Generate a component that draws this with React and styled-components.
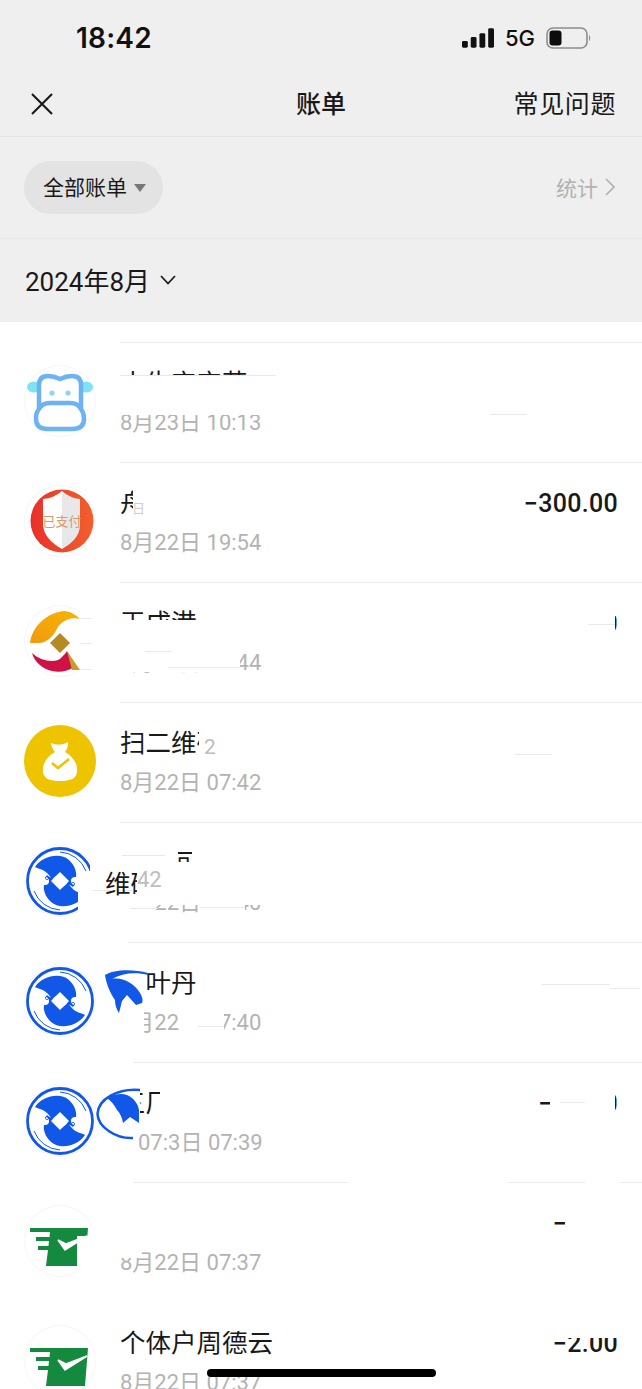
// App.jsx
import React from "react";
import styled, { createGlobalStyle } from "styled-components";

const Global = createGlobalStyle`
  html, body { margin: 0; padding: 0; background: #fff; }
  body { font-family: Roboto, "Noto Sans CJK SC", sans-serif; }
`;

const Page = styled.div`
  position: relative;
  width: 642px;
  height: 1389px;
  overflow: hidden;
  background: #fff;
  color: #191919;
`;

const Top = styled.div`
  background: #efefef;
`;

const StatusBar = styled.div`
  height: 72px;
  display: flex;
  align-items: center;
  justify-content: space-between;
  padding: 4px 51px 0 76px;
  box-sizing: border-box;
`;

const Clock = styled.div`
  font: 600 28px Inter, sans-serif;
  color: #111;
  letter-spacing: 0.2px;
`;

const StatusIcons = styled.div`
  display: flex;
  align-items: center;
  gap: 11px;
`;

const Net = styled.span`
  font: 500 22px Inter, sans-serif;
  color: #111;
`;

const Nav = styled.div`
  height: 64px;
  display: grid;
  grid-template-columns: 1fr auto 1fr;
  align-items: center;
  padding: 0 26px 0 30px;
  border-bottom: 1px solid #e6e6e6;
`;

const NavTitle = styled.div`
  margin-left: -4px;
  font-size: 25px;
  font-weight: 500;
  line-height: 34px;
  padding-top: 2px;
`;

const NavLink = styled.div`
  justify-self: end;
  font-size: 25px;
  line-height: 34px;
  letter-spacing: 0.6px;
  padding-top: 2px;
`;

const FilterBar = styled.div`
  height: 102px;
  display: flex;
  align-items: center;
  justify-content: space-between;
  padding: 0 27px 0 24px;
  box-sizing: border-box;
  border-bottom: 1px solid #e6e6e6;
`;

const Pill = styled.div`
  height: 53px;
  width: 139px;
  box-sizing: border-box;
  padding: 0 0 3px 19px;
  border-radius: 27px;
  background: #e3e3e3;
  display: flex;
  align-items: center;
  gap: 7px;
  font-size: 21px;
`;

const Caret = styled.span`
  width: 0;
  height: 0;
  margin-top: 3px;
  border-left: 6px solid transparent;
  border-right: 6px solid transparent;
  border-top: 8px solid #777;
`;

const Stats = styled.div`
  display: flex;
  align-items: center;
  gap: 7px;
  font-size: 21px;
  color: #b2b2b2;
  padding-bottom: 2px;
`;

const MonthBar = styled.div`
  height: 83px;
  display: flex;
  align-items: center;
  gap: 10px;
  padding: 0 0 2px 25px;
  box-sizing: border-box;
  font-size: 26px;
`;

const List = styled.div`
  padding-top: 20px;
`;

const Row = styled.div`
  position: relative;
  height: 120px;
  display: flex;
`;

const IconSlot = styled.div`
  width: 120px;
  flex: none;
  padding: 23px 0 0 24px;
  box-sizing: border-box;
`;

const Round = styled.div`
  width: 72px;
  height: 72px;
  border-radius: 50%;
  box-shadow: inset 0 0 0 1px #f6f6f6;
  svg { display: block; }
`;

const BankRound = styled(Round)`
  box-shadow: none;
  box-sizing: border-box;
  padding: 2px 0 0 2px;
`;

const Content = styled.div`
  flex: 1;
  min-width: 0;
  border-top: 1px solid ${(p) => (p.$noLine ? "transparent" : "#ececec")};
  padding: 23px 24px 0 0;
`;

const Line = styled.div`
  display: flex;
  justify-content: space-between;
  align-items: center;
  height: 34px;
`;

const Title = styled.div`
  font-size: 25.5px;
  line-height: 34px;
`;

const Amount = styled.div`
  font: 500 25px Roboto, sans-serif;
  letter-spacing: 0.3px;
  color: #191919;
`;

const DateText = styled.div`
  margin-top: 9px;
  padding-left: ${(p) => p.$indent || 0}px;
  font-size: 22px;
  line-height: 28px;
  color: #b3b3b3;
`;

// white smudges lying over the rows
const Patch = styled.div`
  position: absolute;
  left: ${(p) => p.$x}px;
  top: ${(p) => p.$y}px;
  width: ${(p) => p.$w}px;
  height: ${(p) => p.$h}px;
  background: #fff;
`;

const Streak = styled.div`
  position: absolute;
  left: ${(p) => p.$x}px;
  top: ${(p) => p.$y}px;
  width: ${(p) => p.$w}px;
  height: 1px;
  background: #e9e9e9;
`;

const Ghost = styled.div`
  position: absolute;
  left: ${(p) => p.$x}px;
  top: ${(p) => p.$y}px;
  ${(p) => (p.$w ? `width: ${p.$w}px;` : "")}
  overflow: hidden;
  white-space: nowrap;
  font-size: ${(p) => p.$size || 25.5}px;
  line-height: ${(p) => p.$lh || 34}px;
  color: ${(p) => p.$color || "#191919"};
  svg { display: block; }
`;

const HomeBar = styled.div`
  position: absolute;
  left: 207px;
  bottom: 12px;
  width: 229px;
  height: 8px;
  border-radius: 4px;
  background: #000;
`;

const CowLogo = () => (
  <svg width="72" height="72" viewBox="0 0 72 72">
    <ellipse cx="10" cy="22" rx="7" ry="5.5" fill="#7fe3f5" />
    <ellipse cx="62" cy="22" rx="7" ry="5.5" fill="#7fe3f5" />
    <path
      d="M15 44V20Q15 11 24 11Q30 11 36 14Q42 11 48 11Q57 11 57 20V44C60 48 60 52 60 54Q60 64 48 64H24Q12 64 12 54C12 50 12 48 15 44Z"
      fill="#fff"
      stroke="#6db3f2"
      strokeWidth="4.5"
    />
    <path d="M15 44Q18 38 26 38H46Q54 38 57 44" fill="none" stroke="#6db3f2" strokeWidth="4.5" />
    <circle cx="28" cy="28" r="2.6" fill="#8fd4f2" />
    <circle cx="44" cy="28" r="2.6" fill="#8fd4f2" />
  </svg>
);

const ShieldLogo = () => (
  <svg width="72" height="72" viewBox="0 0 72 72">
    <defs>
      <linearGradient id="shieldRed" x1="0" y1="0" x2="1" y2="0">
        <stop offset="0" stopColor="#e8302a" />
        <stop offset="1" stopColor="#f2602c" />
      </linearGradient>
    </defs>
    <circle cx="38" cy="36" r="31.5" fill="url(#shieldRed)" />
    <path d="M38 6Q30 13 19 14V40Q20 54 38 64Z" fill="#fff" />
    <path d="M38 6Q46 13 56 14V40Q56 54 38 64Z" fill="#e8e8ea" />
    <text x="38" y="41" textAnchor="middle" fontSize="13" fill="#dd9a6a" fontFamily="'Noto Sans CJK SC', sans-serif">
      已支付
    </text>
  </svg>
);

const CoinLogo = () => (
  <svg width="72" height="72" viewBox="0 0 72 72">
    <defs>
      <linearGradient id="coinGold" x1="0" y1="1" x2="1" y2="0">
        <stop offset="0" stopColor="#f09a10" />
        <stop offset="1" stopColor="#f7b500" />
      </linearGradient>
    </defs>
    <path d="M6 38C8 22 22 8 40 6C46 6 52 10 56 14C48 12 40 14 34 22C30 30 24 38 14 38Z" fill="url(#coinGold)" />
    <path d="M36 28L46 38L36 48L26 38Z" fill="#b58a24" />
    <path d="M8 48C16 56 30 58 36 54C40 50 42 48 43 46L50 62C44 66 36 68 28 66C18 64 10 56 8 48Z" fill="#cf1145" />
    <path d="M43 46L56 65L48 65Z" fill="#c89a30" />
  </svg>
);

const BagLogo = () => (
  <svg width="72" height="72" viewBox="0 0 72 72">
    <circle cx="36" cy="36" r="36" fill="#eec400" />
    <path
      d="M27 18Q36 22 44 17Q45 22 41 27C50 32 54 40 53 47C52 54 46 56 36 56C26 56 20 54 19 47C18 40 22 32 31 27Q27 22 27 18Z"
      fill="#fff"
    />
    <path d="M28 38L34 43L45 34" fill="none" stroke="#eec400" strokeWidth="2.6" />
  </svg>
);

// the bank's swirl is one half drawn twice, the second turned round
const BankSwirl = () => (
  <>
    <path d="M34 5A29.5 29.5 0 0 1 60 24" fill="none" stroke="#1158e8" strokeWidth="1" />
    <path d="M9 20C16 9 34 5 43 13C52 21 52 33 47 40C44 37 41 37 40 38L42 34L34 26L26 32C22 26 18 23 14 22C12 21 10 21 9 20Z" />
    <path d="M20 29C22 33 24 38 26 42C30 50 36 52 40 52L28 44L20 38Z" />
  </>
);

const BankCloud = () => (
  <>
    <circle cx="7" cy="33" r="5" fill="#fff" />
    <circle cx="13" cy="30" r="5" fill="#fff" />
    <circle cx="19" cy="34" r="4" fill="#fff" />
    <circle cx="12" cy="38" r="6" fill="#fff" />
    <circle cx="5" cy="39" r="4" fill="#fff" />
    <circle cx="21" cy="31" r="1.6" fill="none" stroke="#1158e8" strokeWidth="0.8" />
  </>
);

const BankMark = () => (
  <svg width="68" height="68" viewBox="0 0 68 68" fill="#1158e8">
    <BankSwirl />
    <g transform="rotate(180 34 34)">
      <BankSwirl />
    </g>
    <BankCloud />
    <g transform="rotate(180 34 34)">
      <BankCloud />
    </g>
    <circle cx="34" cy="34" r="32.5" fill="none" stroke="#1158e8" strokeWidth="2.8" />
    <path d="M34 25L43 34L34 43L25 34Z" fill="#fff" />
  </svg>
);

const BankLogo = () => (
  <BankRound>
    <BankMark />
  </BankRound>
);

const MailLogo = () => (
  <svg width="72" height="72" viewBox="0 0 72 72">
    <path d="M6 23H64L61 61H22L24 45H14V41H24.5L25 36H12V32H25.5L26 27H6Z" fill="#138a3e" />
    <path d="M34 35L41 45L63 31L42 39Z" fill="#fff" stroke="#fff" strokeWidth="1.5" />
  </svg>
);

const SmearTop = () => (
  <svg width="46" height="48" viewBox="0 0 46 48" fill="#1158e8">
    <path d="M1 6C10 0 30 0 44 4L44 6C32 3 18 4 8 10C18 8 30 14 36 24C39 29 39 32 38 34L32 36L23 26L18 32L15 44C12 40 11 35 11 31C6 24 2 14 1 6Z" />
  </svg>
);

const SmearLeft = () => (
  <svg width="46" height="54" viewBox="0 0 46 54" fill="#1158e8">
    <path d="M44 3C22 1 2 12 1.5 27C2 40 20 52 37 51" fill="none" stroke="#1158e8" strokeWidth="2.6" />
    <path d="M11 11C18 7 26 6 31 8C38 11 42 17 43 23L43 36L34 30L27 36C26 30 24 26 21 23C18 17 14 13 11 11Z" />
  </svg>
);

const rows = [
  {
    top: 342,
    logo: <CowLogo />,
    title: "小牛宝宝花",
    date: "8月23日 10:13",
    patches: [[118, 375, 165, 40]],
    streaks: [[120, 375, 156], [490, 414, 37]],
  },
  {
    top: 462,
    logo: <ShieldLogo />,
    title: "舟",
    date: "8月22日 19:54",
    amount: "−300.00",
    patches: [[133, 485, 110, 35]],
    ghosts: [{ x: 132, y: 499, size: 13, lh: 20, color: "#cfcfcf", text: "日" }],
  },
  {
    top: 582,
    logo: <CoinLogo />,
    title: "王成港",
    date: "8月22日 07:44",
    amount: "−0.00",
    patches: [[118, 620, 122, 52], [80, 600, 40, 80], [500, 605, 115, 40], [610, 600, 10, 16], [610, 630, 10, 10]],
    streaks: [[80, 618, 12], [80, 643, 12], [80, 669, 12], [145, 651, 27], [168, 667, 72], [588, 624, 27]],
  },
  {
    top: 702,
    logo: <BagLogo />,
    title: "扫二维码",
    date: "8月22日 07:42",
    patches: [[199, 730, 30, 35]],
    streaks: [[515, 754, 37]],
    ghosts: [{ x: 204, y: 733, size: 21, lh: 28, color: "#bdbdbd", text: "2" }],
  },
  {
    top: 822,
    logo: <BankLogo />,
    title: "个人回码",
    date: "8月22日 07:40",
    patches: [
      [78, 871, 50, 42], [90, 845, 40, 28], [80, 905, 40, 20],
      [118, 848, 60, 22], [192, 848, 60, 22], [118, 862, 160, 43],
      [118, 905, 38, 12], [200, 905, 45, 12],
    ],
    streaks: [[122, 855, 43], [130, 908, 28], [200, 907, 45], [92, 890, 40]],
    ghosts: [
      { x: 137, y: 866, size: 22, lh: 28, color: "#bdbdbd", text: "42" },
      { x: 105, y: 867, w: 32, text: "维码" },
    ],
  },
  {
    top: 942,
    logo: <BankLogo />,
    title: "周叶丹",
    date: "8月22日 07:40",
    patches: [[118, 942, 10, 1], [118, 968, 29, 34], [118, 1008, 26, 30], [179, 1008, 45, 30]],
    streaks: [[198, 1026, 26], [542, 984, 68], [610, 988, 30]],
    ghosts: [{ x: 104, y: 969, lh: 48, text: <SmearTop /> }],
  },
  {
    top: 1062,
    logo: <BankLogo />,
    title: "三厂",
    date: "07:3日 07:39",
    indent: 18,
    amount: "−12.00",
    patches: [[118, 1062, 15, 1], [118, 1085, 22, 35], [160, 1085, 60, 35], [550, 1090, 65, 26], [614, 1085, 8, 10], [614, 1110, 8, 10]],
    streaks: [[560, 1102, 25]],
    ghosts: [{ x: 96, y: 1087, lh: 54, text: <SmearLeft /> }],
  },
  {
    top: 1182,
    logo: <MailLogo />,
    title: "个体户周德云",
    date: "8月22日 07:37",
    amount: "−2.00",
    patches: [
      [118, 1182, 15, 1], [348, 1182, 160, 1], [585, 1182, 35, 1],
      [118, 1205, 170, 35], [118, 1240, 24, 18], [77, 1236, 32, 40], [92, 1224, 20, 12], [565, 1205, 60, 35],
    ],
  },
  {
    top: 1302,
    noLine: true,
    logo: <MailLogo />,
    title: "个体户周德云",
    date: "8月22日 07:37",
    amount: "−2.00",
    patches: [[540, 1325, 80, 13], [190, 1326, 70, 5]],
  },
];

export default function App() {
  return (
    <Page>
      <Global />
      <Top>
        <StatusBar>
          <Clock>18:42</Clock>
          <StatusIcons>
            <svg width="32" height="20" viewBox="0 0 33 20" fill="#111">
              <rect x="0" y="13" width="6" height="7" rx="1.5" />
              <rect x="9" y="9" width="6" height="11" rx="1.5" />
              <rect x="18" y="5" width="6" height="15" rx="1.5" />
              <rect x="27" y="0" width="6" height="20" rx="1.5" />
            </svg>
            <Net>5G</Net>
            <svg width="45" height="22" viewBox="0 0 45 22">
              <rect x="1" y="1" width="40" height="20" rx="6" fill="none" stroke="#8c8c8c" strokeWidth="1.6" />
              <rect x="3.5" y="3.5" width="12" height="15" rx="3" fill="#0c0c0c" />
              <path d="M43 8C44.5 9 44.5 13 43 14Z" fill="#8c8c8c" />
            </svg>
          </StatusIcons>
        </StatusBar>
        <Nav>
          <svg width="24" height="24" viewBox="0 0 24 24" fill="none" stroke="#191919" strokeWidth="2.1">
            <path d="M2 2L22 22M22 2L2 22" />
          </svg>
          <NavTitle>账单</NavTitle>
          <NavLink>常见问题</NavLink>
        </Nav>
        <FilterBar>
          <Pill>
            全部账单
            <Caret />
          </Pill>
          <Stats>
            统计
            <svg width="10" height="18" viewBox="0 0 10 18" fill="none" stroke="#b2b2b2" strokeWidth="1.7">
              <path d="M1 1L9 9L1 17" />
            </svg>
          </Stats>
        </FilterBar>
        <MonthBar>
          2024年8月
          <svg width="16" height="10" viewBox="0 0 16 10" fill="none" stroke="#191919" strokeWidth="1.7">
            <path d="M1 1L8 8.5L15 1" />
          </svg>
        </MonthBar>
      </Top>
      <List>
        {rows.map((r) => (
          <Row key={r.top}>
            <IconSlot>
              <Round>{r.logo}</Round>
            </IconSlot>
            <Content $noLine={r.noLine}>
              <Line>
                <Title>{r.title}</Title>
                {r.amount && <Amount>{r.amount}</Amount>}
              </Line>
              <DateText $indent={r.indent}>{r.date}</DateText>
            </Content>
            {r.patches?.map(([x, y, w, h]) => (
              <Patch key={`${x}-${y}`} $x={x} $y={y - r.top} $w={w} $h={h} />
            ))}
            {r.streaks?.map(([x, y, w]) => (
              <Streak key={`${x}-${y}`} $x={x} $y={y - r.top} $w={w} />
            ))}
            {r.ghosts?.map((g) => (
              <Ghost key={g.x} $x={g.x} $y={g.y - r.top} $w={g.w} $size={g.size} $lh={g.lh} $color={g.color}>
                {g.text}
              </Ghost>
            ))}
          </Row>
        ))}
      </List>
      <HomeBar />
    </Page>
  );
}
